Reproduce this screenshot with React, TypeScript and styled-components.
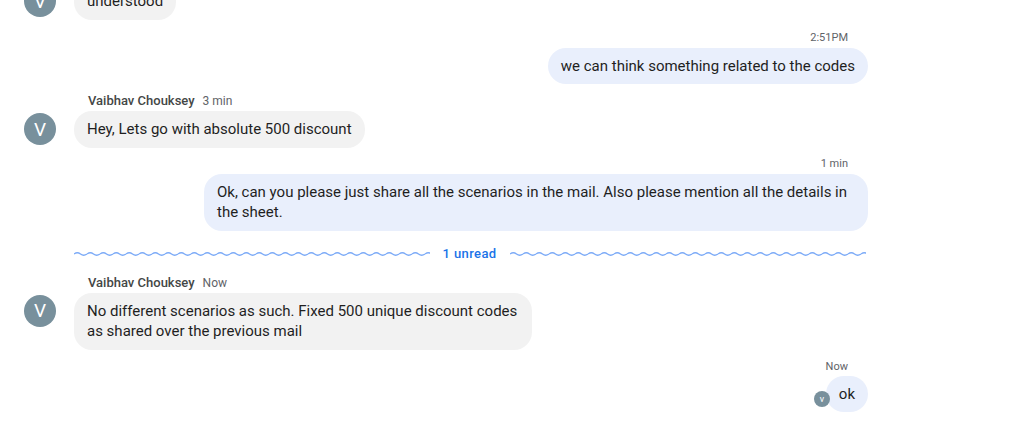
import React from "react";
import styled, { createGlobalStyle } from "styled-components";

const GlobalStyle = createGlobalStyle`
  html, body { margin: 0; padding: 0; background: #ffffff; overflow: hidden; }
  body { font-family: Roboto, "Noto Sans", Arial, sans-serif; color: #1f1f1f; }
`;

const Thread = styled.div`
  width: 844px;
  margin: -17px 0 0 24px;
  display: flex;
  flex-direction: column;
`;

const Group = styled.div<{ $out?: boolean; $gap: number }>`
  display: flex;
  flex-direction: column;
  align-items: ${(p) => (p.$out ? "flex-end" : "stretch")};
  margin-top: ${(p) => p.$gap}px;
`;

const Meta = styled.div<{ $out?: boolean; $after?: number }>`
  height: 16px;
  line-height: 16px;
  display: flex;
  align-items: center;
  padding-left: ${(p) => (p.$out ? 0 : 64)}px;
  margin-right: ${(p) => (p.$out ? 20 : 0)}px;
  margin-bottom: ${(p) => p.$after ?? 2}px;
`;

const Name = styled.span`
  font-size: 13px;
  font-weight: 500;
  color: #444746;
`;

const Time = styled.span<{ $out?: boolean }>`
  font-size: ${(p) => (p.$out ? 11 : 12)}px;
  color: #5f6368;
  margin-left: ${(p) => (p.$out ? 0 : 8)}px;
`;

const Row = styled.div`
  display: flex;
  align-items: flex-start;
  gap: 18px;
`;

const Avatar = styled.div`
  width: 32px;
  height: 32px;
  margin-top: 2px;
  border-radius: 50%;
  background: #78909c;
  color: #fff;
  font-size: 19px;
  display: flex;
  align-items: center;
  justify-content: center;
  flex-shrink: 0;
`;

const Bubble = styled.div<{ $out?: boolean }>`
  position: relative;
  box-sizing: border-box;
  max-width: ${(p) => (p.$out ? 664 : 458)}px;
  padding: 8px 13px;
  border-radius: 18px;
  background: ${(p) => (p.$out ? "#e9effc" : "#f2f2f2")};
  font-size: 15px;
  line-height: 20.5px;
  color: #1f1f1f;
`;

const MiniAvatar = styled.div`
  position: absolute;
  left: -12px;
  bottom: 5px;
  width: 16px;
  height: 16px;
  border-radius: 50%;
  background: #78909c;
  color: #fff;
  font-size: 9px;
  line-height: 16px;
  text-align: center;
`;

const Divider = styled.div`
  display: flex;
  align-items: center;
  height: 20px;
  margin: 13px 2px 0 50px;
`;

const WaveBox = styled.svg`
  flex: 1;
  height: 6px;
  display: block;
`;

const UnreadLabel = styled.span`
  font-size: 13px;
  font-weight: 500;
  color: #1a73e8;
  letter-spacing: 0.4px;
  margin: 0 13px 0 12px;
`;

const Wave: React.FC<{ id: string }> = ({ id }) => (
  <WaveBox preserveAspectRatio="none">
    <defs>
      <pattern id={id} width="13" height="6" patternUnits="userSpaceOnUse">
        <path
          d="M0 3 Q3.25 0.5 6.5 3 T13 3"
          fill="none"
          stroke="#7baaf7"
          strokeWidth="1.3"
        />
      </pattern>
    </defs>
    <rect width="100%" height="6" fill={`url(#${id})`} />
  </WaveBox>
);

type Msg =
  | { kind: "in"; name?: string; time?: string; text: string; gap: number }
  | { kind: "out"; time: string; text: string; gap: number; after: number; mini?: boolean }
  | { kind: "divider" };

const messages: Msg[] = [
  { kind: "in", text: "understood", gap: 0 },
  { kind: "out", time: "2:51PM", text: "we can think something related to the codes", gap: 10, after: 2 },
  {
    kind: "in",
    name: "Vaibhav Chouksey",
    time: "3 min",
    text: "Hey, Lets go with absolute 500 discount",
    gap: 9,
  },
  {
    kind: "out",
    time: "1 min",
    text: "Ok, can you please just share all the scenarios in the mail. Also please mention all the details in the sheet.",
    gap: 8,
    after: 2,
  },
  { kind: "divider" },
  {
    kind: "in",
    name: "Vaibhav Chouksey",
    time: "Now",
    text: "No different scenarios as such. Fixed 500 unique discount codes as shared over the previous mail",
    gap: 11,
  },
  { kind: "out", time: "Now", text: "ok", gap: 9, after: 1, mini: true },
];

export default function App() {
  return (
    <>
      <GlobalStyle />
      <Thread>
        {messages.map((m, i) => {
          if (m.kind === "divider") {
            return (
              <Divider key={i}>
                <Wave id="wl" />
                <UnreadLabel>1 unread</UnreadLabel>
                <Wave id="wr" />
              </Divider>
            );
          }
          if (m.kind === "out") {
            return (
              <Group key={i} $out $gap={m.gap}>
                <Meta $out $after={m.after}>
                  <Time $out>{m.time}</Time>
                </Meta>
                <Bubble $out>
                  {m.mini && <MiniAvatar>v</MiniAvatar>}
                  {m.text}
                </Bubble>
              </Group>
            );
          }
          return (
            <Group key={i} $gap={m.gap}>
              {m.name && (
                <Meta>
                  <Name>{m.name}</Name>
                  <Time>{m.time}</Time>
                </Meta>
              )}
              <Row>
                <Avatar>V</Avatar>
                <Bubble>{m.text}</Bubble>
              </Row>
            </Group>
          );
        })}
      </Thread>
    </>
  );
}
